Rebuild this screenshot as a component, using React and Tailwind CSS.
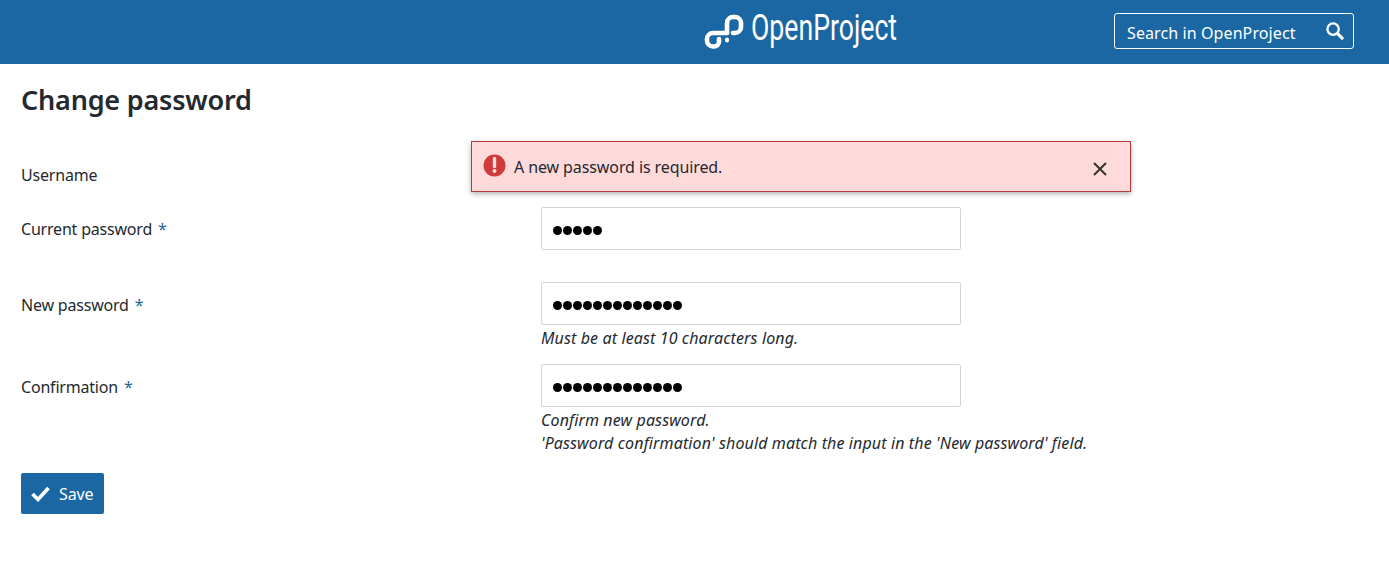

const Dots = ({ n }) => (
  <span className="flex gap-[1px]">
    {Array.from({ length: n }).map((_, i) => (
      <span key={i} className="w-[9px] h-[9px] rounded-full bg-black" />
    ))}
  </span>
);

const Field = ({ n }) => (
  <div className="w-[420px] h-[43px] border border-[#d5d5d5] rounded-[2px] bg-white flex items-center pl-[10.5px] pt-[4px]">
    <Dots n={n} />
  </div>
);

const Label = ({ children, required }) => (
  <div className="w-[520px] shrink-0 text-[16px] leading-[24px] text-[#24292f] tracking-[-0.2px]">
    {children}
    {required && <span className="text-[#1a67a3] ml-[6px]">*</span>}
  </div>
);

export default function App() {
  return (
    <div className="relative min-h-[580px] bg-white text-[#24292f] overflow-hidden" style={{ fontFamily: '"Noto Sans", sans-serif' }}>
      <header className="h-[64px] bg-[#1a67a3] flex items-center relative">
        <div className="flex items-center ml-[704px]">
          <svg width="40" height="36" viewBox="0 0 40 36" fill="none" stroke="white" strokeWidth="4.6" strokeLinecap="round" strokeLinejoin="round" className="-mt-[1px]">
            <path d="M23 19V9a6 6 0 0 1 6-6h2a6 6 0 0 1 6 6v4a6 6 0 0 1-6 6h-2" />
            <path d="M23 25.5v1" strokeWidth="4" />
            <path d="M23 19H9a6 6 0 0 0-6 6v1.5a6 6 0 0 0 6 6h1a5 5 0 0 0 5-5V25" />
          </svg>
          <span className="text-white text-[36px] leading-[44px] font-normal origin-left scale-x-[0.74] ml-[7px] whitespace-nowrap -mt-[8px]" style={{ fontFamily: 'Roboto, sans-serif' }}>OpenProject</span>
        </div>
        <div className="absolute left-[1114px] top-[13px] w-[240px] h-[36px] border border-white rounded-[3px] flex items-center justify-between pl-[12px] pr-[9px] pt-[3px] text-white text-[16px] tracking-[0.1px]">
          <span className="whitespace-nowrap">Search in OpenProject</span>
          <svg width="18" height="18" viewBox="0 0 19 19" fill="none" stroke="white" className="shrink-0 -mt-[3px]">
            <circle cx="7.5" cy="7.5" r="6" strokeWidth="2.4" />
            <path d="M12 12 L17 17" strokeWidth="3.4" strokeLinecap="round" />
          </svg>
        </div>
      </header>

      <main className="pl-[21px]">
        <h1 className="text-[27px] leading-[36px] font-semibold mt-[18px] text-[#24292f] tracking-[-0.2px]">Change password</h1>

        <div className="mt-[45px] h-[24px]"><Label>Username</Label></div>

        <div className="flex mt-[20px]">
          <div className="pt-[10px]"><Label required>Current password</Label></div>
          <Field n={5} />
        </div>

        <div className="flex mt-[32px]">
          <div className="pt-[11px]"><Label required>New password</Label></div>
          <div>
            <Field n={13} />
            <div className="text-[16px] leading-[23px] italic mt-[2px] tracking-[0.12px]">Must be at least 10 characters long.</div>
          </div>
        </div>

        <div className="flex mt-[14px]">
          <div className="pt-[11px]"><Label required>Confirmation</Label></div>
          <div>
            <Field n={13} />
            <div className="text-[16px] leading-[23px] italic mt-[2px] tracking-[0.12px]">Confirm new password.</div>
            <div className="text-[16px] leading-[23px] italic whitespace-nowrap tracking-[0.12px]">'Password confirmation' should match the input in the 'New password' field.</div>
          </div>
        </div>

        <button className="mt-[18px] w-[83px] h-[41px] bg-[#1a67a3] rounded-[2px] flex items-center text-white text-[16px] pl-[10px] pt-[1px] tracking-[-0.1px]">
          <svg width="19" height="16" viewBox="0 0 19 16" fill="none" stroke="white" strokeWidth="3.6" className="mr-[9px]">
            <path d="M1.5 8 L7 13.5 L17.5 2" />
          </svg>
          Save
        </button>
      </main>

      <div className="absolute left-[471px] top-[141px] w-[660px] h-[51px] bg-[#ffdada] border border-[#b83a3a] shadow-[0_2px_5px_rgba(0,0,0,0.3)] flex items-center pl-[11px] pr-[23px]">
        <svg width="23" height="23" viewBox="0 0 23 23" className="shrink-0 -mt-[3px]">
          <circle cx="11.5" cy="11.5" r="11" fill="#cf3a3a" />
          <path d="M11.5 4.5 V12.5" stroke="#ffdada" strokeWidth="3.4" strokeLinecap="round" />
          <circle cx="11.5" cy="17" r="2" fill="#ffdada" />
        </svg>
        <span className="ml-[8px] text-[16px] text-[#24292f] flex-1 mt-[1px] tracking-[-0.1px]">A new password is required.</span>
        <svg width="14" height="14" viewBox="0 0 14 14" stroke="#333" strokeWidth="2" className="mt-[5px]">
          <path d="M1 1 L13 13 M13 1 L1 13" />
        </svg>
      </div>
    </div>
  );
}
